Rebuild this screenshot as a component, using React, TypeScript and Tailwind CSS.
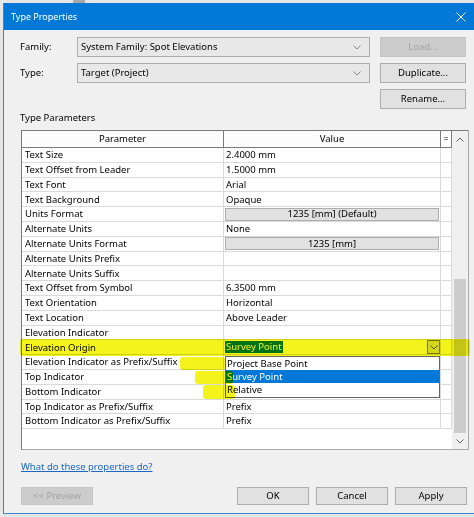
import React from "react";

type Val =
  | { kind: "text"; text: string }
  | { kind: "button"; text: string }
  | { kind: "empty" }
  | { kind: "origin" };

const rows: { name: string; value: Val }[] = [
  { name: "Text Size", value: { kind: "text", text: "2.4000 mm" } },
  { name: "Text Offset from Leader", value: { kind: "text", text: "1.5000 mm" } },
  { name: "Text Font", value: { kind: "text", text: "Arial" } },
  { name: "Text Background", value: { kind: "text", text: "Opaque" } },
  { name: "Units Format", value: { kind: "button", text: "1235 [mm] (Default)" } },
  { name: "Alternate Units", value: { kind: "text", text: "None" } },
  { name: "Alternate Units Format", value: { kind: "button", text: "1235 [mm]" } },
  { name: "Alternate Units Prefix", value: { kind: "empty" } },
  { name: "Alternate Units Suffix", value: { kind: "empty" } },
  { name: "Text Offset from Symbol", value: { kind: "text", text: "6.3500 mm" } },
  { name: "Text Orientation", value: { kind: "text", text: "Horizontal" } },
  { name: "Text Location", value: { kind: "text", text: "Above Leader" } },
  { name: "Elevation Indicator", value: { kind: "empty" } },
  { name: "Elevation Origin", value: { kind: "origin" } },
  { name: "Elevation Indicator as Prefix/Suffix", value: { kind: "empty" } },
  { name: "Top Indicator", value: { kind: "empty" } },
  { name: "Bottom Indicator", value: { kind: "empty" } },
  { name: "Top Indicator as Prefix/Suffix", value: { kind: "text", text: "Prefix" } },
  { name: "Bottom Indicator as Prefix/Suffix", value: { kind: "text", text: "Prefix" } },
];

function Chevron({ up = false, color = "#606060" }: { up?: boolean; color?: string }) {
  return (
    <svg width="8" height="5" viewBox="0 0 8 5" className={up ? "rotate-180" : ""}>
      <path d="M0.5 0.5 L4 4 L7.5 0.5" fill="none" stroke={color} strokeWidth="1" />
    </svg>
  );
}

function Combo({ text }: { text: string }) {
  return (
    <div className="flex h-[20px] w-[293px] items-center border border-[#adadad] bg-[#e8e8e8] pl-[3px] pr-[8px]">
      <span className="flex-1">{text}</span>
      <Chevron color="#8a8a8a" />
    </div>
  );
}

function Btn({ label, className = "", disabled = false }: { label: string; className?: string; disabled?: boolean }) {
  return (
    <div
      className={`flex items-center justify-center border ${
        disabled ? "border-[#c4c4c4] bg-[#cccccc] text-[#a3a3a3]" : "border-[#adadad] bg-[#e1e1e1]"
      } ${className}`}
    >
      {label}
    </div>
  );
}

function ValueCell({ value }: { value: Val }) {
  if (value.kind === "text") return <span className="pl-[2px]">{value.text}</span>;
  if (value.kind === "button")
    return (
      <div className="mx-px flex h-[13px] flex-1 items-center justify-center border border-[#adadad] bg-[#e1e1e1]">
        {value.text}
      </div>
    );
  if (value.kind === "origin")
    return (
      <div className="flex h-full flex-1 items-center pl-px">
        <span className="bg-[#0078d7] px-px leading-[12px] text-white">Survey Point</span>
        <div className="ml-auto flex h-[14px] w-[13px] items-center justify-center border border-[#7a7a7a] bg-[#e1e1e1]">
          <Chevron color="#505050" />
        </div>
      </div>
    );
  return null;
}

function ParamGrid() {
  return (
    <div className="relative ml-px mt-[6px] flex h-[320px] w-[448px] shrink-0 border border-[#a9a9a9] border-l-[#7a7a7a] border-t-[#7a7a7a] bg-white">
      <div className="flex w-[430px] flex-col">
        <div className="flex h-[17px] border-b border-[#7a7a7a] bg-[#fcfcfc]">
          <div className="flex w-[202px] items-center justify-center border-r border-[#7a7a7a]">Parameter</div>
          <div className="flex w-[217px] items-center justify-center border-r border-[#7a7a7a]">Value</div>
          <div className="flex w-[11px] items-center justify-center border-r border-[#7a7a7a] text-[8px]">=</div>
        </div>
        {rows.map((r) => (
          <div key={r.name} className="flex h-[14.8px] border-b border-[#dadada]">
            <div className="flex w-[202px] items-center border-r border-[#dadada] pl-[3px]">{r.name}</div>
            <div className="flex w-[217px] items-center border-r border-[#dadada]">
              <ValueCell value={r.value} />
            </div>
            <div className="w-[11px] border-r border-[#dadada]" />
          </div>
        ))}
      </div>
      <div className="flex w-[16px] flex-col bg-[#f0f0f0]">
        <div className="flex h-[17px] items-center justify-center">
          <Chevron up />
        </div>
        <div className="flex flex-1 flex-col">
          <div className="mx-[2px] mt-[131px] flex-1 bg-[#cdcdcd]" />
        </div>
        <div className="flex h-[16px] items-center justify-center">
          <Chevron />
        </div>
      </div>

      <div className="absolute left-[203px] top-[225px] flex h-[42px] w-[215px] flex-col border border-[#646464] bg-white">
        <div className="h-[13px] pl-px leading-[13px]">Project Base Point</div>
        <div className="h-[13px] bg-[#0078d7] pl-px leading-[13px] text-white">Survey Point</div>
        <div className="h-[13px] pl-px leading-[13px]">Relative</div>
      </div>
    </div>
  );
}

export default function App() {
  return (
    <div className="relative h-[517px] w-[474px] overflow-hidden bg-[#e6e6e6] font-['Noto_Sans',sans-serif] text-[9.5px] leading-none text-black">
      <div className="flex h-[3px]">
        <div className="ml-[73px] w-[12px] bg-[#a8a8a8]" />
      </div>
      <div className="ml-[3px] flex h-[511px] flex-col border-b border-l border-[#3b86d1] bg-[#f0f0f0]">
        <div className="flex h-[27px] shrink-0 items-center justify-between bg-[#0078d7] pl-[7px] pr-[8px] text-[9px] text-white">
          <span>Type Properties</span>
          <svg width="10" height="10" viewBox="0 0 10 10">
            <path d="M0.5 0.5 L9.5 9.5 M9.5 0.5 L0.5 9.5" stroke="#ffffff" strokeWidth="1" />
          </svg>
        </div>

        <div className="flex flex-col pl-[16px] pt-[7px]">
          <div className="flex h-[20px] items-center">
            <span className="w-[57px]">Family:</span>
            <Combo text="System Family: Spot Elevations" />
            <Btn label="Load..." disabled className="ml-[10px] h-[20px] w-[86px]" />
          </div>
          <div className="mt-[6px] flex h-[20px] items-center">
            <span className="w-[57px]">Type:</span>
            <Combo text="Target (Project)" />
            <Btn label="Duplicate..." className="ml-[10px] h-[20px] w-[86px]" />
          </div>
          <div className="mt-[6px] flex h-[20px]">
            <Btn label="Rename..." className="ml-[360px] h-[20px] w-[86px]" />
          </div>
          <div className="mt-[3px] flex h-[12px] items-center">Type Parameters</div>

          <ParamGrid />

          <div className="ml-px mt-[11px] flex h-[12px] items-center">
            <span className="text-[#1a66c4] underline">What do these properties do?</span>
          </div>

          <div className="mt-[14px] flex h-[18px]">
            <Btn label="<< Preview" disabled className="ml-px w-[72px]" />
            <Btn label="OK" className="ml-[144px] w-[72px]" />
            <Btn label="Cancel" className="ml-[7px] w-[72px]" />
            <Btn label="Apply" className="ml-[7px] w-[72px]" />
          </div>
        </div>
      </div>

      {/* highlighter strokes */}
      <div className="pointer-events-none absolute left-[20px] top-[339px] h-[17px] w-[450px] rounded-[3px] bg-[#f4f41c] mix-blend-multiply" />
      <div className="pointer-events-none absolute left-[180px] top-[357px] h-[13px] w-[45px] rounded-[3px] bg-[#f4f41c] mix-blend-multiply" />
      <div className="pointer-events-none absolute left-[195px] top-[371px] h-[13px] w-[38px] rounded-[3px] bg-[#f4f41c] mix-blend-multiply" />
      <div className="pointer-events-none absolute left-[203px] top-[385px] h-[14px] w-[32px] rounded-[3px] bg-[#f4f41c] mix-blend-multiply" />
    </div>
  );
}
